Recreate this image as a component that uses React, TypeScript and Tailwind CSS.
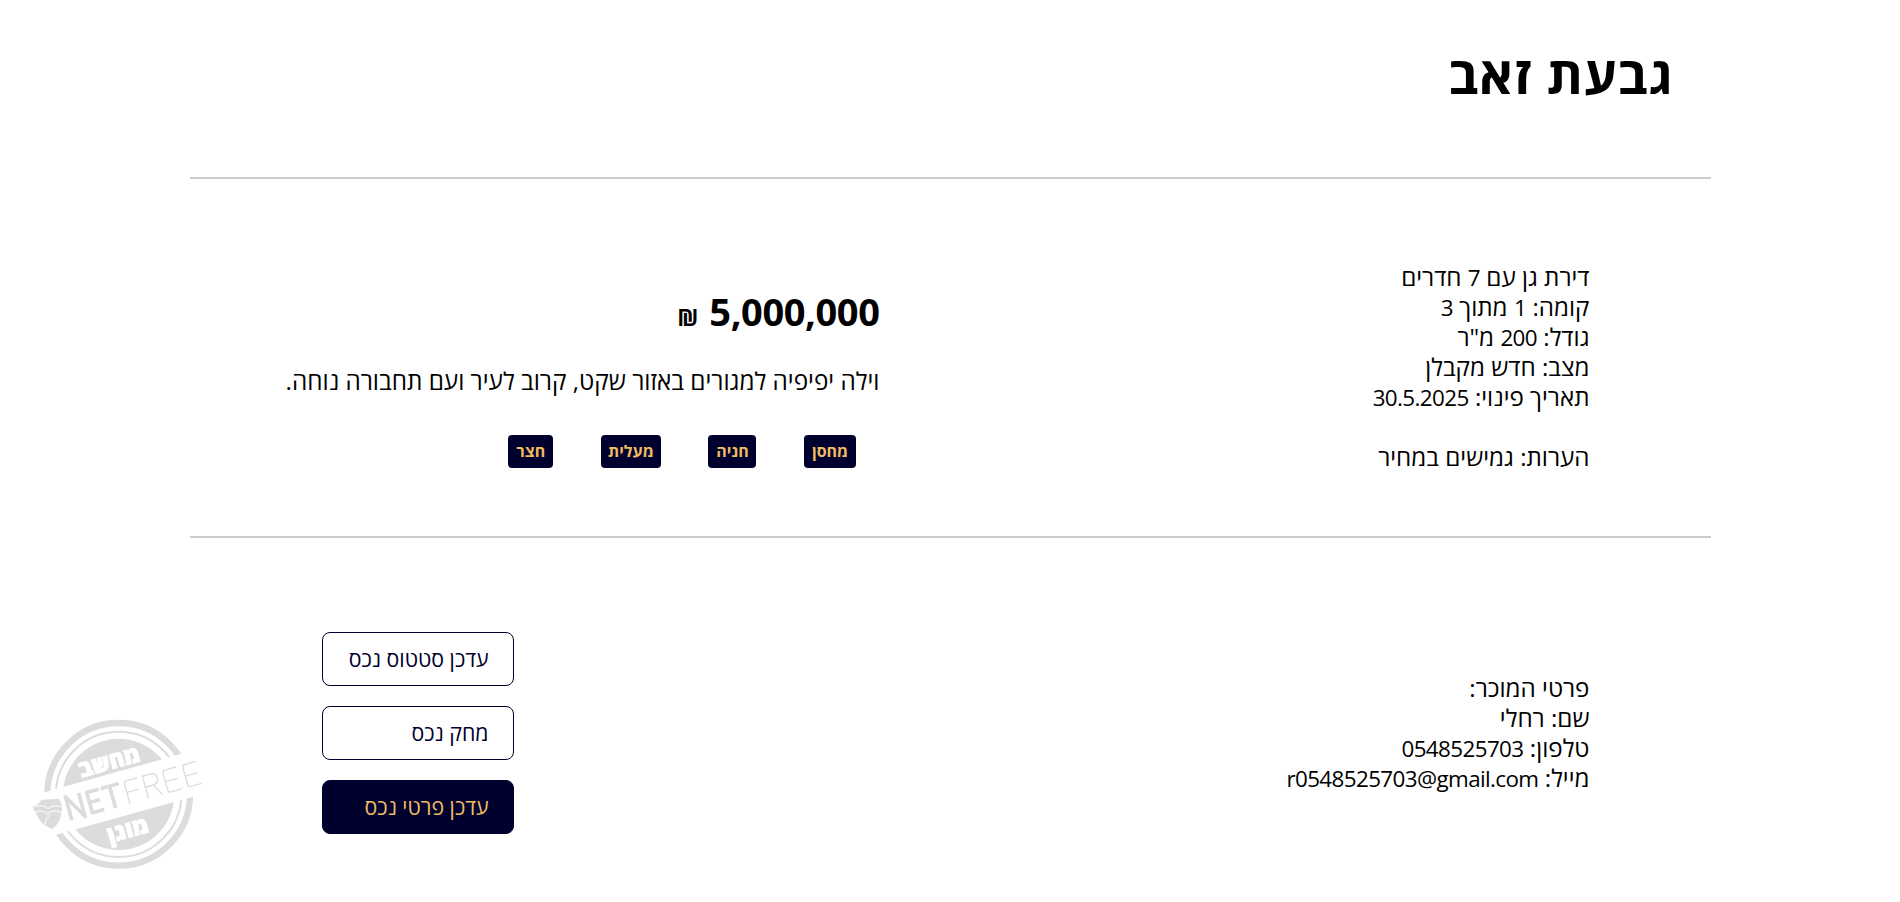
const details = [
  'דירת גן עם 7 חדרים',
  'קומה: 1 מתוך 3',
  'גודל: 200 מ"ר',
  'מצב: חדש מקבלן',
  'תאריך פינוי: 30.5.2025',
  '',
  'הערות: גמישים במחיר',
];
const seller = ['פרטי המוכר:', 'שם: רחלי', 'טלפון: 0548525703', 'מייל: r0548525703@gmail.com'];

function Stamp() {
  return (
    <svg viewBox="0 0 600 540" className="fixed bottom-[22px] left-5 h-[180px] w-[200px]" direction="ltr">
      <g fill="none" stroke="#dcdcdc">
        <circle cx="296" cy="283" r="214" strokeWidth="19" />
        <circle cx="296" cy="283" r="188" strokeWidth="6" />
      </g>
      <circle cx="296" cy="283" r="167" fill="#dcdcdc" />
      <path d="M20 291.500L560 140L600 268L60 417.500Z" fill="#fff" />
      <g fontFamily="'Open Sans', sans-serif" fontWeight="800" fill="#fff" stroke="#fff" strokeWidth="3" textAnchor="middle" fontSize="68">
        <text transform="translate(274 208) rotate(-15.600)" textLength="188" lengthAdjust="spacingAndGlyphs">מחשב</text>
        <text transform="translate(330 412) rotate(-15.600)" textLength="124" lengthAdjust="spacingAndGlyphs">מוגן</text>
      </g>
      <g fill="none" stroke="#dcdcdc" transform="translate(151 362) rotate(-15.600)">
        <path strokeWidth="11" strokeLinejoin="round" d="M5 0V-73L46 0V-73M107 -5H70V-68H107M70 -37H103M113 -68H170M141 -68V0" />
        <path strokeWidth="4" d="M186 0V-62Q186 -70 194 -70H228M186 -36H223M244 0V-70H268Q286 -70 286 -54Q286 -36 268 -36H244M268 -36L288 0M348 -2H314Q306 -2 306 -10V-62Q306 -70 314 -70H348M306 -36H344M410 -2H376Q368 -2 368 -10V-62Q368 -70 376 -70H410M368 -36H406" />
      </g>
      <path d="M36 319L50 316L66 299L117 296L126 316V322Q126 364 98 387Q61 376 48 340Z" fill="#dcdcdc" />
      <path d="M36 322Q66 310 84 326Q102 312 128 322M44 338Q65 326 82 342Q98 326 125 338M75 372Q77 354 90 344" fill="none" stroke="#fff" strokeWidth="3" />
    </svg>
  );
}

function Mixed({ text }: { text: string }) {
  return (
    <>
      {text.split(/([0-9A-Za-z][0-9A-Za-z@.]*)/).map((part, i) =>
        i % 2 ? (
          <span key={i} className="text-[22.4px] tracking-[-0.6px]">{part}</span>
        ) : (
          part
        ),
      )}
    </>
  );
}

function Lines({ lines }: { lines: string[] }) {
  return (
    <>
      {lines.map((line, i) => (
        <p key={i} className="h-[30px]"><Mixed text={line} /></p>
      ))}
    </>
  );
}

function Tag({ label, className }: { label: string; className: string }) {
  return (
    <span className={`flex h-[33px] items-center justify-center rounded bg-[#00002e] pb-px text-base font-bold text-[#f0bb62] ${className}`}>
      {label}
    </span>
  );
}

export default function App() {
  return (
    <main dir="rtl" className="h-[902px] overflow-hidden bg-white font-['Open_Sans','Noto_Sans',sans-serif] text-[24.2px] leading-[30px] text-black">
      <div className="mx-auto w-[1521px]">
        <header className="flex h-[177px] items-start pt-[38px] pr-[37px]">
          <h1 className="text-[52px] leading-[72px] font-bold tracking-[0.8px]">גבעת זאב</h1>
        </header>
        <hr className="border-t-2 border-[#ccc]" />
        <section className="flex h-[357px] justify-between pr-[121px] pl-[95px]">
          <div className="pt-[83px] whitespace-nowrap">
            <Lines lines={details} />
          </div>
          <div className="mr-auto w-[594px] pt-[104px] whitespace-nowrap">
            <p className="-mr-px flex h-[56px] items-baseline gap-[11px] leading-[56px] font-bold">
              <span className="text-[38px] tracking-[-0.4px]">5,000,000</span>
              <span className="text-[23px]">₪</span>
            </p>
            <p className="-mr-px mt-[27px] text-[24.3px]">וילה יפיפיה למגורים באזור שקט, קרוב לעיר ועם תחבורה נוחה.</p>
            <div className="mt-[39px] flex gap-[47.6px] pr-[22.5px]">
              <Tag label="מחסן" className="w-[52px]" />
              <Tag label="חניה" className="w-12" />
              <Tag label="מעלית" className="w-[60px]" />
              <Tag label="חצר" className="w-[45px]" />
            </div>
          </div>
        </section>
        <hr className="border-t-2 border-[#ccc]" />
        <section className="flex justify-between pr-[121px] pl-[132px]">
          <div className="pt-[135px] whitespace-nowrap">
            <Lines lines={seller} />
          </div>
          <div className="flex w-48 flex-col gap-5 pt-[94px] text-[21.3px]">
            <button className="h-[54px] rounded-lg border border-[#00002e] pr-[24px] pb-px text-right text-[#00002e]">עדכן סטטוס נכס</button>
            <button className="h-[54px] rounded-lg border border-[#00002e] pr-[24px] pb-px text-right text-[#00002e]">מחק נכס</button>
            <button className="h-[54px] rounded-lg border border-[#00002e] bg-[#00002e] pr-[24px] pb-px text-right text-[#f0bb62]">עדכן פרטי נכס</button>
          </div>
        </section>
      </div>
      <Stamp />
    </main>
  );
}
